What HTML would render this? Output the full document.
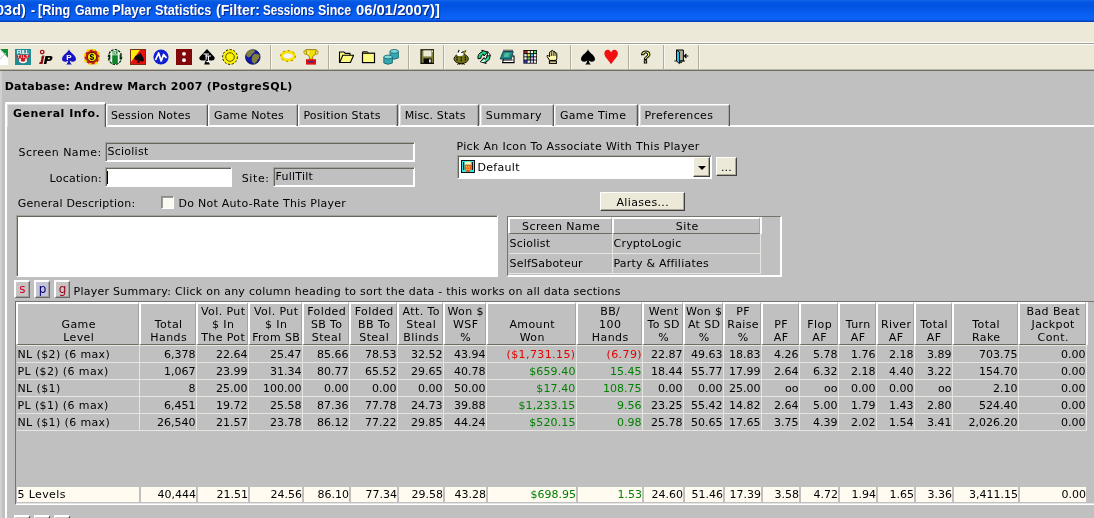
<!DOCTYPE html>
<html><head><meta charset="utf-8"><title>Ring Game Player Statistics</title>
<style>
html,body{margin:0;padding:0}
body{width:1094px;height:518px;overflow:hidden;position:relative;background:#c0c0c0;will-change:transform;font:11px "DejaVu Sans","Liberation Sans",sans-serif;color:#000;letter-spacing:.25px}
div,span{position:absolute;white-space:nowrap;box-sizing:border-box}
.t{line-height:13px;height:13px}
.b{font-weight:bold;letter-spacing:.2px}
#title{left:0;top:0;width:1094px;height:22px;background:linear-gradient(#1866e4 0,#0458e6 8%,#0252e0 25%,#055aec 50%,#0b64f6 78%,#0a5ef0 90%,#0548c8 96%,#033aa0 100%)}
.tw{font:bold 14px/17px "Liberation Sans",sans-serif;color:#fff;text-shadow:1px 1px 0 #0a2a8a;transform-origin:0 0;letter-spacing:0}
#menu{left:0;top:22px;width:1094px;height:49px;background:#ece9d8}
.hl{left:0;width:1094px;height:1px}
.sep{top:45px;width:2px;height:24px;border-left:1px solid #b0ad9c;border-right:1px solid #f8f7f0}
.ic{top:49px;width:16px;height:16px}
.tab{top:104px;height:22px;border:1px solid #fff;border-right-color:#555;border-bottom:none;border-radius:2px 2px 0 0;box-shadow:inset -1px 0 0 #a4a4a4,inset 1px 1px 0 #dcdcdc;padding:5px 0 0 6px;line-height:13px}
.sunk{border:1px solid;border-color:#808080 #fff #fff #808080}
.sunk2{border:1px solid;border-color:#a4a49c #fff #fff #a4a49c;box-shadow:inset 1px 1px 0 #66665e,inset -1px -1px 0 #fff}
.btn{background:#ece9d8;border:1px solid;border-color:#fff #404040 #404040 #fff;box-shadow:inset -1px -1px 0 #aca899;text-align:center}
.hc{top:302px;height:43px;border-style:solid;border-width:2px 1px 1px 2px;border-color:#fff #a4a4a4 #6c6c64 #fff;text-align:center;line-height:13px}
.hc span{left:1px;right:-.4px;bottom:0px;text-align:center;white-space:pre;line-height:13px;letter-spacing:.4px}
.c{height:17px;line-height:13px;padding-top:2px;border-right:1px solid #e6e6e0;border-bottom:1px solid #e6e6e0;text-align:right;padding-right:.5px;letter-spacing:0}
.c.l{text-align:left;padding-left:.5px;letter-spacing:.38px}
.f{top:487px;height:15px;background:#fffbf0;line-height:13px;padding-top:1px;text-align:right;padding-right:0;letter-spacing:0}
.f.l{text-align:left;padding-left:.5px;letter-spacing:.38px}
.r{color:#e00000}.g{color:#008000}
</style></head><body>

<div id="title"></div>
<span class="tw" style="left:-3.82px;top:1.5px;transform:scaleX(1.036)">03d)</span>
<span class="tw" style="left:30.58px;top:1.5px;transform:scaleX(0.885)">-</span>
<span class="tw" style="left:38.16px;top:1.5px;transform:scaleX(0.901)">[Ring</span>
<span class="tw" style="left:74.52px;top:1.5px;transform:scaleX(0.881)">Game</span>
<span class="tw" style="left:112.07px;top:1.5px;transform:scaleX(0.928)">Player</span>
<span class="tw" style="left:155.08px;top:1.5px;transform:scaleX(0.906)">Statistics</span>
<span class="tw" style="left:215.82px;top:1.5px;transform:scaleX(1.009)">(Filter:</span>
<span class="tw" style="left:263.03px;top:1.5px;transform:scaleX(0.832)">Sessions</span>
<span class="tw" style="left:318.29px;top:1.5px;transform:scaleX(0.889)">Since</span>
<span class="tw" style="left:355.67px;top:1.5px;transform:scaleX(1.057)">06/01/2007)]</span>
<div id="menu"></div>
<div class="hl" style="top:42px;background:#fff"></div><div class="hl" style="top:43px;background:#a09e8c"></div><div class="hl" style="top:44px;background:#fff"></div>
<div class="hl" style="top:69px;background:#b8b5a4"></div><div class="hl" style="top:70px;background:#716f64"></div>
<div style="left:0;top:71px;width:2px;height:447px;background:#d0d0d0"></div>
<div class="ic" style="left:-8px"><svg width="16" height="16" viewBox="0 0 16 16"><rect x="0" y="0" width="16" height="16" fill="#fff"/><path d="M8 0H16V9Z" fill="#109030"/><path d="M8 0L16 9M3 15L14 4" stroke="#c8c8c8" fill="none"/></svg></div>
<div class="ic" style="left:15px"><svg width="16" height="16" viewBox="0 0 16 16"><rect width="16" height="16" fill="#208c94"/><rect x="1.5" y="1" width="13" height="4.6" fill="#3c9ca4"/><text x="8" y="5" font-size="5" fill="#fff" font-family="Liberation Sans,sans-serif" font-weight="bold" text-anchor="middle" textLength="12">FULL</text><path d="M1.6 5.8H14.4V8.6H13L12 12.6Q8 15.8 4 12.6L3 8.6H1.6Z" fill="#d01820"/><text x="8" y="8.6" font-size="3.6" fill="#fff" font-family="Liberation Sans,sans-serif" font-weight="bold" text-anchor="middle" textLength="11">TILT</text><path d="M5 9.4V12.4Q8 14.6 11 12.4V9.4" stroke="#fff" stroke-width="1.7" fill="none"/></svg></div>
<div class="ic" style="left:38px"><svg width="16" height="16" viewBox="0 0 16 16"><circle cx="4.2" cy="3" r="1.7" fill="#fff" stroke="#a01010" stroke-width="1.3"/><path d="M4.6 6.5L6.4 6.5L4.6 15L1.2 15L1.6 13L2.6 13L3.6 8.4L2.8 8.4Z" fill="#901010"/><path d="M7.5 7H12.5Q15 7 14.4 9.5Q13.8 12 10.8 12H9L8.4 15H5.8Z" fill="#000"/><path d="M10 8.8H12L11.6 10.2H9.7Z" fill="#ece9d8"/></svg></div>
<div class="ic" style="left:61px"><svg width="16" height="16" viewBox="0 0 16 16"><path d="M8 0C8 3 1 6 1 10C1 13 5 13.5 7.2 11.5C7 13.5 6 15 5 15.5L11 15.5C10 15 9 13.5 8.8 11.5C11 13.5 15 13 15 10C15 6 8 3 8 0Z" fill="#1414c4"/><text x="8" y="11" font-size="8" fill="#fff" font-family="Liberation Sans,sans-serif" font-weight="bold" text-anchor="middle">P</text></svg></div>
<div class="ic" style="left:84px"><svg width="16" height="16" viewBox="0 0 16 16"><circle cx="8" cy="8" r="7.6" fill="#c81818"/><circle cx="8" cy="8" r="7.6" fill="none" stroke="#f0e000" stroke-width="2.4" stroke-dasharray="3 3"/><circle cx="8" cy="8" r="4.6" fill="#f4e800" stroke="#400" stroke-width=".8"/><text x="8" y="11.2" font-size="8.5" fill="#000" font-family="Liberation Sans,sans-serif" font-weight="bold" text-anchor="middle">$</text></svg></div>
<div class="ic" style="left:107px"><svg width="16" height="16" viewBox="0 0 16 16"><ellipse cx="8" cy="8" rx="6.6" ry="7.4" fill="#e8f4e8" stroke="#0c2c10" stroke-width="1.3" stroke-dasharray="2.6 1"/><path d="M5.2 6.2H10.8V14.6Q8 15.6 5.2 14.6Z" fill="#108428"/><rect x="5.6" y="1.2" width="4.8" height="4.2" fill="#187c30"/><text x="8" y="5" font-size="4.6" fill="#fff" font-family="Liberation Sans,sans-serif" font-weight="bold" text-anchor="middle">R</text><path d="M2.6 5.4V10.6M13.4 5.4V10.6" stroke="#0c2c10" stroke-width="1.5"/></svg></div>
<div class="ic" style="left:130px"><svg width="16" height="16" viewBox="0 0 16 16"><rect x=".5" y=".5" width="15" height="15" fill="#e81010" stroke="#7a3010"/><path d="M1 1H10L1 13Z" fill="#f8f000"/><g transform="translate(3.2 3.6) rotate(14 8 8) scale(.7)"><path d="M8 0C8 3 1 6 1 10C1 13 5 13.5 7.2 11.5C7 13.5 6 15 5 15.5L11 15.5C10 15 9 13.5 8.8 11.5C11 13.5 15 13 15 10C15 6 8 3 8 0Z" fill="#100808"/></g></svg></div>
<div class="ic" style="left:153px"><svg width="16" height="16" viewBox="0 0 16 16"><circle cx="8" cy="8" r="7.6" fill="#1020d0"/><path d="M2.5 11L5.6 4L8.2 12L10.6 5.5L13.5 9" stroke="#fff" stroke-width="1.8" fill="none" stroke-linejoin="round"/></svg></div>
<div class="ic" style="left:176px"><svg width="16" height="16" viewBox="0 0 16 16"><rect width="16" height="16" fill="#800808"/><circle cx="8" cy="4.8" r="1.9" fill="#fff"/><circle cx="8" cy="11.2" r="1.9" fill="#fff"/></svg></div>
<div class="ic" style="left:199px"><svg width="16" height="16" viewBox="0 0 16 16"><path d="M8 0L15.6 8.2Q16 11.4 12.8 11.6Q10.4 11.6 9 10.4L10.8 15.6H5.2L7 10.4Q5.6 11.6 3.2 11.6Q0 11.4 .4 8.2Z" fill="#000"/><path d="M4.4 5H10M7.2 5V10.8M6.4 7H12M9.4 7V12.6M7.4 12.6H11" stroke="#fff" stroke-width="1.1" fill="none"/></svg></div>
<div class="ic" style="left:222px"><svg width="16" height="16" viewBox="0 0 16 16"><circle cx="8" cy="8" r="7.4" fill="#f8f000" stroke="#202000" stroke-width="1" stroke-dasharray="2.2 1.6"/><circle cx="8" cy="8" r="4.3" fill="#fcf400" stroke="#504800" stroke-width=".9"/></svg></div>
<div class="ic" style="left:245px"><svg width="16" height="16" viewBox="0 0 16 16"><circle cx="7.8" cy="8" r="7.3" fill="#1018b0" stroke="#101040" stroke-width=".8"/><path d="M3.6 2Q6.5 0 9.6 1.4Q10.2 3.8 7.4 4.8Q6.4 7.6 3.5 8.6Q.8 7.4 1.2 5Q2 3 3.6 2Z" fill="#80803c"/><path d="M9.2 5Q12.6 4 14.4 6.2Q14.8 9.2 12.8 10.6Q11.8 14 9 14.8Q6.2 12.8 6.8 10Q6.8 6.4 9.2 5Z" fill="#80803c"/></svg></div>
<div class="ic" style="left:280px"><svg width="16" height="16" viewBox="0 0 16 16"><ellipse cx="8" cy="7" rx="6.4" ry="4.2" fill="none" stroke="#f4e400" stroke-width="2.8"/><ellipse cx="8" cy="7" rx="4.4" ry="2" fill="#f4f0f8"/><ellipse cx="8" cy="7" rx="7.5" ry="5.4" fill="none" stroke="#a07800" stroke-width=".9" stroke-dasharray="2 3"/></svg></div>
<div class="ic" style="left:303px"><svg width="16" height="16" viewBox="0 0 16 16"><path d="M2.8.6H13.2Q13.4 6 9.6 7.6V10.2H6.4V7.6Q2.6 6 2.8.6Z" fill="#f0e000" stroke="#806000" stroke-width=".7"/><path d="M5.2 1.6V5.4" stroke="#fffcc0" stroke-width="1"/><path d="M2.8 1.6Q.2 1.8 1.2 4.2Q2 5.6 3.8 5.4M13.2 1.6Q15.8 1.8 14.8 4.2Q14 5.6 12.2 5.4" stroke="#c0a800" stroke-width="1.2" fill="none"/><rect x="3" y="10.2" width="10" height="5.4" fill="#e01010"/><rect x="5" y="12" width="6" height="1.4" fill="#303080"/></svg></div>
<div class="ic" style="left:338px"><svg width="16" height="16" viewBox="0 0 16 16"><path d="M1.5 3H6L7.2 4.4H12V6.2H15.6L12.4 13.5H1.5Z" fill="#fffc80" stroke="#000" stroke-width="1.1" stroke-linejoin="round"/><path d="M1.8 13.2L4.8 6.2H12" fill="none" stroke="#000" stroke-width="1.1"/></svg></div>
<div class="ic" style="left:360px"><svg width="16" height="16" viewBox="0 0 16 16"><path d="M2.6 4.2V2.8H7.4L8.4 4.2" fill="#fffc80" stroke="#000" stroke-width="1"/><rect x="2.5" y="4.2" width="12" height="9.4" fill="#fffc80" stroke="#000" stroke-width="1.2"/></svg></div>
<div class="ic" style="left:383px"><svg width="16" height="16" viewBox="0 0 16 16"><g stroke="#106068" stroke-width=".8"><path d="M7 2.2V9Q10.6 11.4 15.4 9V2.2Z" fill="#38a8b0"/><ellipse cx="11.2" cy="2.4" rx="4.2" ry="1.9" fill="#80d8dc"/><path d="M.8 8V14Q5 16.6 9.4 14V8Z" fill="#38a8b0"/><ellipse cx="5.1" cy="8" rx="4.3" ry="1.9" fill="#80d8dc"/></g></svg></div>
<div class="ic" style="left:418px"><svg width="16" height="16" viewBox="0 0 16 16"><g transform="translate(1 0)"><rect x="2" y=".8" width="13" height="13.6" fill="#80803c" stroke="#101000" stroke-width="1.2"/><rect x="4.4" y="1.4" width="8" height="6" fill="#ece9d8"/><rect x="4.6" y="9.4" width="8" height="5" fill="#080808"/><rect x="10" y="10.4" width="1.8" height="3" fill="#ece9d8"/><rect x="13" y="1.6" width="1" height="1.2" fill="#fff"/></g></svg></div>
<div class="ic" style="left:453px"><svg width="16" height="16" viewBox="0 0 16 16"><ellipse cx="8.2" cy="9.8" rx="7.2" ry="4.8" fill="#74741c" stroke="#181800" stroke-width="1"/><path d="M4 6.4Q4 2 7.2 1.4Q10.4 2 10.6 6Q7.4 7.6 4 6.4Z" fill="#fff"/><path d="M9.6 2.8L13 1.6L11.2 4.8Z" fill="#e8d800" stroke="#000" stroke-width=".6"/><path d="M5 3.6L6.2 1M8.4 3.8L9.6 3" stroke="#000" stroke-width="1.1"/><path d="M4 7.6V12.6M8.2 8V13.2M12.4 7.6V12.6" stroke="#080800" stroke-width="1.2" stroke-dasharray="1.6 .8"/><path d="M4.6 15.8L5.8 14.2L7 15.8M9 15.8L10.2 14.2L11.4 15.8" stroke="#000" stroke-width="1" fill="none"/></svg></div>
<div class="ic" style="left:476px"><svg width="16" height="16" viewBox="0 0 16 16"><path d="M2 9.8Q1.2 4.6 6.4 2.8L5.8 1.2L11.4 3L8 7L7.4 5.2Q4.6 6.2 4.8 9.4Z" fill="#20d890" stroke="#000" stroke-width="1"/><path d="M13.8 5.6Q15 11 9.6 13L10.2 14.4L4.4 12.8L8 8.6L8.6 10.6Q11.4 9.6 11 6.2Z" fill="#20d890" stroke="#000" stroke-width="1"/><path d="M9 10.8Q7 13 5.4 12.6" stroke="#fff" stroke-width="1.4" fill="none"/><path d="M11.6 2.4L14.6 6.4L11.4 7Z" fill="#e8fff4" stroke="#000" stroke-width=".8"/></svg></div>
<div class="ic" style="left:499px"><svg width="16" height="16" viewBox="0 0 16 16"><path d="M5 7H15V13.6H3.6Z" fill="#fff" stroke="#000" stroke-width="1.1"/><path d="M4 11H13.6" stroke="#000" stroke-width="1"/><path d="M4.2 2.4H14.2L12.4 10H1.2Z" fill="#18888c" stroke="#084048" stroke-width=".9"/><path d="M5.6 5H10.4M5 7H9.8" stroke="#90f090" stroke-width="1.2"/><path d="M5 .6V2.4M7 .6V2.4M9 .6V2.4M11 .6V2.4M13 .6V2.4" stroke="#000" stroke-width=".9"/></svg></div>
<div class="ic" style="left:522px"><svg width="16" height="16" viewBox="0 0 16 16"><rect x="1.4" y="1" width="13.6" height="13.6" fill="#000"/><rect x="2.3" y="1.9" width="2.4" height="2.3" fill="#b02828"/><rect x="5.5" y="1.9" width="2.4" height="2.3" fill="#f4f0a0"/><rect x="8.7" y="1.9" width="2.4" height="2.3" fill="#f8f8f8"/><rect x="11.9" y="1.9" width="2.4" height="2.3" fill="#50d850"/><rect x="2.3" y="5.1" width="2.4" height="2.3" fill="#f0f0f0"/><rect x="5.5" y="5.1" width="2.4" height="2.3" fill="#f0e840"/><rect x="8.7" y="5.1" width="2.4" height="2.3" fill="#40c8e8"/><rect x="11.9" y="5.1" width="2.4" height="2.3" fill="#f8f8f8"/><rect x="2.3" y="8.3" width="2.4" height="2.3" fill="#f8f8f8"/><rect x="5.5" y="8.3" width="2.4" height="2.3" fill="#58d058"/><rect x="8.7" y="8.3" width="2.4" height="2.3" fill="#e8a0e8"/><rect x="11.9" y="8.3" width="2.4" height="2.3" fill="#f0f0f0"/><rect x="2.3" y="11.5" width="2.4" height="2.3" fill="#3838e0"/><rect x="5.5" y="11.5" width="2.4" height="2.3" fill="#f8f8f8"/><rect x="8.7" y="11.5" width="2.4" height="2.3" fill="#d8d8ff"/><rect x="11.9" y="11.5" width="2.4" height="2.3" fill="#f8f8f8"/></svg></div>
<div class="ic" style="left:545px"><svg width="16" height="16" viewBox="0 0 16 16"><path d="M4.6 11.4L2.2 7.6Q1.6 6.2 3.2 6.4L4.6 7.8V3.2Q5.4 2 6.2 3.2V2Q7.2.6 8.2 2V2.6Q9.2 1.6 10 3V4Q11 3.2 11.8 4.4V9.6L11 11.4Z" fill="#fff8a8" stroke="#000" stroke-width="1"/><path d="M6.4 3.4V7M8.2 2.8V7M10 3.6V7" stroke="#000" stroke-width=".8"/><rect x="4.4" y="12" width="7" height="2.4" fill="#e8d890" stroke="#000" stroke-width="1"/></svg></div>
<div class="ic" style="left:580px"><svg width="16" height="16" viewBox="0 0 16 16"><path d="M8 0C8 3 1 6 1 10C1 13 5 13.5 7.2 11.5C7 13.5 6 15 5 15.5L11 15.5C10 15 9 13.5 8.8 11.5C11 13.5 15 13 15 10C15 6 8 3 8 0Z" fill="#000"/></svg></div>
<div class="ic" style="left:603px"><svg width="16" height="16" viewBox="0 0 16 16"><g transform="translate(.9 .4) scale(.9 .96)"><path d="M8 15.5C5 10.5.5 8 .5 4.2C.5 1.5 2.5.3 4.2.3C6 .3 7.5 1.6 8 3.2C8.5 1.6 10 .3 11.8.3C13.5.3 15.5 1.5 15.5 4.2C15.5 8 11 10.5 8 15.5Z" fill="#f01010"/></g></svg></div>
<div class="ic" style="left:638px"><svg width="16" height="16" viewBox="0 0 16 16"><text x="8" y="13.6" font-size="16.5" fill="#f8f468" stroke="#000" stroke-width="1" font-family="Liberation Sans,sans-serif" font-weight="bold" text-anchor="middle">?</text></svg></div>
<div class="ic" style="left:673px"><svg width="16" height="16" viewBox="0 0 16 16"><path d="M3.6 1H10.4V12H3.6Z" fill="#a8a898" stroke="#000" stroke-width="1"/><path d="M3.6 1L6.4 3V14.6L3.6 12Z" fill="#30d8f8" stroke="#000" stroke-width="1"/><path d="M1.4 12H3.6M7 12H12M7 13.6H9" stroke="#000" stroke-width=".9"/><path d="M15.4 7H11.6M13.4 5L11.4 7L13.4 9" stroke="#000" stroke-width="1.1" fill="none"/></svg></div>
<div class="sep" style="left:270px"></div>
<div class="sep" style="left:328px"></div>
<div class="sep" style="left:408px"></div>
<div class="sep" style="left:443px"></div>
<div class="sep" style="left:570px"></div>
<div class="sep" style="left:628px"></div>
<div class="sep" style="left:663px"></div>
<div class="sep" style="left:698px"></div>
<span class="t b" id="db" style="left:4.70px;top:80px;letter-spacing:0.275px">Database: Andrew March 2007 (PostgreSQL)</span>
<div style="left:5px;top:125px;width:1100px;height:400px;border-left:2px solid #fff;border-top:2px solid #fff"></div>
<div class="tab" style="left:106px;width:102px"></div>
<span class="t" id="t0" style="left:110.90px;top:109px;letter-spacing:0.198px">Session Notes</span>
<div class="tab" style="left:208px;width:90px"></div>
<span class="t" id="t1" style="left:213.99px;top:109px;letter-spacing:0.184px">Game Notes</span>
<div class="tab" style="left:298px;width:100px"></div>
<span class="t" id="t2" style="left:303.40px;top:109px;letter-spacing:0.212px">Position Stats</span>
<div class="tab" style="left:399px;width:80px"></div>
<span class="t" id="t3" style="left:404.63px;top:109px;letter-spacing:0.153px">Misc. Stats</span>
<div class="tab" style="left:480px;width:74px"></div>
<span class="t" id="t4" style="left:485.85px;top:109px;letter-spacing:0.404px">Summary</span>
<div class="tab" style="left:554px;width:84px"></div>
<span class="t" id="t5" style="left:559.89px;top:109px;letter-spacing:0.362px">Game Time</span>
<div class="tab" style="left:639px;width:91px"></div>
<span class="t" id="t6" style="left:644.41px;top:109px;letter-spacing:0.386px">Preferences</span>
<div class="tab" style="left:5px;top:102px;width:101px;height:25px;background:#c0c0c0;border-left-width:2px;border-top-width:2px"></div>
<span class="t b" id="tsel" style="left:12.94px;top:107px;letter-spacing:0.500px">General Info.</span>
<span class="t" id="lsn" style="left:18.54px;top:146px;letter-spacing:0.473px">Screen Name:</span>
<div class="sunk2" style="left:105px;top:142px;width:310px;height:20px"><span class="t" style="left:1.5px;top:2px">Sciolist</span></div>
<span class="t" id="lloc" style="left:49.51px;top:172px;letter-spacing:0.247px">Location:</span>
<div class="sunk2" style="left:105px;top:167px;width:127px;height:20px;background:#fff"><div style="left:1px;top:3px;width:1px;height:13px;background:#000"></div></div>
<span class="t" id="lsite" style="left:241.67px;top:172px;letter-spacing:0.632px">Site:</span>
<div class="sunk2" style="left:273px;top:167px;width:142px;height:20px"><span class="t" style="left:1.5px;top:2px">FullTilt</span></div>
<span class="t" id="lgd" style="left:17.82px;top:197px;letter-spacing:0.218px">General Description:</span>
<div class="sunk" style="left:161px;top:196px;width:13px;height:13px;background:#fbfaf2;border-color:#8a8a80 #fff #fff #8a8a80;box-shadow:inset 1px 1px 0 #9c9c94"></div>
<span class="t" id="ldn" style="left:178.45px;top:197px;letter-spacing:0.272px">Do Not Auto-Rate This Player</span>
<div class="sunk2" style="left:16px;top:215px;width:482px;height:62px;background:#fff"></div>
<span class="t" id="lpick" style="left:456.51px;top:140px;letter-spacing:0.320px">Pick An Icon To Associate With This Player</span>
<div class="sunk2" style="left:457px;top:155px;width:255px;height:24px;background:#fff"><div style="left:3px;top:4px;width:14px;height:13px"><svg width="14" height="13" viewBox="0 0 14 13"><rect x=".5" y=".5" width="13" height="12" fill="#30e4e8" stroke="#101010"/><path d="M2.6 2V10M11.4 2V10" stroke="#101820" stroke-width="1.2"/><path d="M3.6 5.2H10.4V8.4Q9.4 10.6 8.6 10.8V12H5.4V10.8Q4.6 10.6 3.6 8.4Z" fill="#e85818"/><path d="M4.6 6H5.8V7.2H4.6ZM7 6H8.2V7.2H7ZM5.8 7.4H7V8.6H5.8ZM8.2 7.4H9.4V8.6H8.2ZM5 9H6.2V10H5ZM7.4 9H8.6V10H7.4Z" fill="#f8d840"/><path d="M3.8 2.6Q7 .6 10.2 2.6V5H3.8Z" fill="#fcf4b0"/><path d="M3.8 5H10.2" stroke="#c06010" stroke-width=".8"/></svg></div></div>
<span class="t" id="ldef" style="left:477.42px;top:161px;letter-spacing:0.325px">Default</span>
<div class="btn" style="left:693px;top:157px;width:17px;height:20px"><div style="left:4px;top:8px;width:0;height:0;border:4px solid transparent;border-top:4px solid #000;border-bottom:none"></div></div>
<div class="btn" style="left:716px;top:157px;width:21px;height:19px"><span class="t" style="left:0;right:0;top:3px;text-align:center">...</span></div>
<div class="btn" style="left:600px;top:192px;width:85px;height:19px"></div>
<span class="t" id="lali" style="left:616.47px;top:196px;letter-spacing:0.343px">Aliases...</span>
<div style="left:507px;top:216px;width:275px;height:61px;border-style:solid;border-width:1px 2px 2px 1px;border-color:#74746c #fff #fff #74746c"></div>
<div class="hc" style="left:508px;top:217px;width:104px;height:17px"><span style="bottom:0">Screen Name</span></div>
<div class="hc" style="left:612px;top:217px;width:148px;height:17px"><span style="bottom:0">Site</span></div>
<div style="left:760px;top:217px;width:2px;height:17px;background:#fafafa"></div>
<div class="c l" style="left:509px;top:234px;width:104px;height:20px;padding-top:3px;letter-spacing:.22px">Sciolist</div>
<div class="c l" style="left:613px;top:234px;width:148px;height:20px;padding-top:3px;letter-spacing:.22px">CryptoLogic</div>
<div class="c l" style="left:509px;top:254px;width:104px;height:20px;padding-top:3px;letter-spacing:.22px">SelfSaboteur</div>
<div class="c l" style="left:613px;top:254px;width:148px;height:20px;padding-top:3px;letter-spacing:.22px">Party &amp; Affiliates</div>
<div style="left:14px;top:280px;width:16px;height:18px;background:#c8c4c4;border-style:solid;border-width:2px 1px 1px 2px;border-color:#fff #686868 #686868 #fff;box-shadow:inset -1px -1px 0 #a0a0a0;color:#d8002c"><span style="left:0;right:0;top:1px;text-align:center;font-size:12px;line-height:13px;letter-spacing:0">s</span></div>
<div style="left:34px;top:280px;width:16px;height:18px;background:#c4c4d6;border-style:solid;border-width:2px 1px 1px 2px;border-color:#fff #686868 #686868 #fff;box-shadow:inset -1px -1px 0 #a0a0a0;color:#000078"><span style="left:0;right:0;top:1px;text-align:center;font-size:12px;line-height:13px;letter-spacing:0">p</span></div>
<div style="left:54px;top:280px;width:16px;height:18px;background:#c8c4c4;border-style:solid;border-width:2px 1px 1px 2px;border-color:#fff #686868 #686868 #fff;box-shadow:inset -1px -1px 0 #a0a0a0;color:#98001c"><span style="left:0;right:0;top:1px;text-align:center;font-size:12px;line-height:13px;letter-spacing:0">g</span></div>
<span class="t" id="lps" style="left:73.51px;top:285px;letter-spacing:0.258px">Player Summary: Click on any column heading to sort the data - this works on all data sections</span>
<div style="left:15px;top:301px;width:1090px;height:204px;border:1px solid;border-color:#74746c #fff #fff #74746c;box-shadow:inset 0 -1px 0 #e4e4e4"></div>
<div style="left:1086px;top:302px;width:2px;height:43px;background:#fafafa"></div>
<div class="hc" style="left:16px;width:123px"><span>Game
Level</span></div>
<div class="hc" style="left:139px;width:57px"><span>Total
Hands</span></div>
<div class="hc" style="left:196px;width:52px"><span>Vol. Put
$ In
The Pot</span></div>
<div class="hc" style="left:248px;width:54px"><span>Vol. Put
$ In
From SB</span></div>
<div class="hc" style="left:302px;width:47px"><span>Folded
SB To
Steal</span></div>
<div class="hc" style="left:349px;width:48px"><span>Folded
BB To
Steal</span></div>
<div class="hc" style="left:397px;width:46px"><span>Att. To
Steal
Blinds</span></div>
<div class="hc" style="left:443px;width:43px"><span>Won $
WSF
%</span></div>
<div class="hc" style="left:486px;width:90px"><span>Amount
Won</span></div>
<div class="hc" style="left:576px;width:66px"><span>BB/
100
Hands</span></div>
<div class="hc" style="left:642px;width:41px"><span>Went
To SD
%</span></div>
<div class="hc" style="left:683px;width:40px"><span>Won $
At SD
%</span></div>
<div class="hc" style="left:723px;width:38px"><span>PF
Raise
%</span></div>
<div class="hc" style="left:761px;width:38px"><span>PF
AF</span></div>
<div class="hc" style="left:799px;width:39px"><span>Flop
AF</span></div>
<div class="hc" style="left:838px;width:38px"><span>Turn
AF</span></div>
<div class="hc" style="left:876px;width:38px"><span>River
AF</span></div>
<div class="hc" style="left:914px;width:38px"><span>Total
AF</span></div>
<div class="hc" style="left:952px;width:66px"><span>Total
Rake</span></div>
<div class="hc" style="left:1018px;width:68px"><span>Bad Beat
Jackpot
Cont.</span></div>
<div style="left:17px;top:345px;width:1070px;height:1px;background:#e6e6e0"></div>
<div class="c l" style="left:17px;top:346px;width:123px">NL ($2) (6 max)</div>
<div class="c" style="left:140px;top:346px;width:57px">6,378</div>
<div class="c" style="left:197px;top:346px;width:52px">22.64</div>
<div class="c" style="left:249px;top:346px;width:54px">25.47</div>
<div class="c" style="left:303px;top:346px;width:47px">85.66</div>
<div class="c" style="left:350px;top:346px;width:48px">78.53</div>
<div class="c" style="left:398px;top:346px;width:46px">32.52</div>
<div class="c" style="left:444px;top:346px;width:43px">43.94</div>
<div class="c r" style="left:487px;top:346px;width:90px;letter-spacing:.4px">($1,731.15)</div>
<div class="c r" style="left:577px;top:346px;width:66px;letter-spacing:.4px;padding-right:0;text-indent:1px">(6.79)</div>
<div class="c" style="left:643px;top:346px;width:41px">22.87</div>
<div class="c" style="left:684px;top:346px;width:40px">49.63</div>
<div class="c" style="left:724px;top:346px;width:38px">18.83</div>
<div class="c" style="left:762px;top:346px;width:38px">4.26</div>
<div class="c" style="left:800px;top:346px;width:39px">5.78</div>
<div class="c" style="left:839px;top:346px;width:38px">1.76</div>
<div class="c" style="left:877px;top:346px;width:38px">2.18</div>
<div class="c" style="left:915px;top:346px;width:38px">3.89</div>
<div class="c" style="left:953px;top:346px;width:66px">703.75</div>
<div class="c" style="left:1019px;top:346px;width:68px">0.00</div>
<div class="c l" style="left:17px;top:363px;width:123px">PL ($2) (6 max)</div>
<div class="c" style="left:140px;top:363px;width:57px">1,067</div>
<div class="c" style="left:197px;top:363px;width:52px">23.99</div>
<div class="c" style="left:249px;top:363px;width:54px">31.34</div>
<div class="c" style="left:303px;top:363px;width:47px">80.77</div>
<div class="c" style="left:350px;top:363px;width:48px">65.52</div>
<div class="c" style="left:398px;top:363px;width:46px">29.65</div>
<div class="c" style="left:444px;top:363px;width:43px">40.78</div>
<div class="c g" style="left:487px;top:363px;width:90px;letter-spacing:.12px">$659.40</div>
<div class="c g" style="left:577px;top:363px;width:66px">15.45</div>
<div class="c" style="left:643px;top:363px;width:41px">18.44</div>
<div class="c" style="left:684px;top:363px;width:40px">55.77</div>
<div class="c" style="left:724px;top:363px;width:38px">17.99</div>
<div class="c" style="left:762px;top:363px;width:38px">2.64</div>
<div class="c" style="left:800px;top:363px;width:39px">6.32</div>
<div class="c" style="left:839px;top:363px;width:38px">2.18</div>
<div class="c" style="left:877px;top:363px;width:38px">4.40</div>
<div class="c" style="left:915px;top:363px;width:38px">3.22</div>
<div class="c" style="left:953px;top:363px;width:66px">154.70</div>
<div class="c" style="left:1019px;top:363px;width:68px">0.00</div>
<div class="c l" style="left:17px;top:380px;width:123px">NL ($1)</div>
<div class="c" style="left:140px;top:380px;width:57px">8</div>
<div class="c" style="left:197px;top:380px;width:52px">25.00</div>
<div class="c" style="left:249px;top:380px;width:54px">100.00</div>
<div class="c" style="left:303px;top:380px;width:47px">0.00</div>
<div class="c" style="left:350px;top:380px;width:48px">0.00</div>
<div class="c" style="left:398px;top:380px;width:46px">0.00</div>
<div class="c" style="left:444px;top:380px;width:43px">50.00</div>
<div class="c g" style="left:487px;top:380px;width:90px;letter-spacing:.12px">$17.40</div>
<div class="c g" style="left:577px;top:380px;width:66px">108.75</div>
<div class="c" style="left:643px;top:380px;width:41px">0.00</div>
<div class="c" style="left:684px;top:380px;width:40px">0.00</div>
<div class="c" style="left:724px;top:380px;width:38px">25.00</div>
<div class="c" style="left:762px;top:380px;width:38px">oo</div>
<div class="c" style="left:800px;top:380px;width:39px">oo</div>
<div class="c" style="left:839px;top:380px;width:38px">0.00</div>
<div class="c" style="left:877px;top:380px;width:38px">0.00</div>
<div class="c" style="left:915px;top:380px;width:38px">oo</div>
<div class="c" style="left:953px;top:380px;width:66px">2.10</div>
<div class="c" style="left:1019px;top:380px;width:68px">0.00</div>
<div class="c l" style="left:17px;top:397px;width:123px">PL ($1) (6 max)</div>
<div class="c" style="left:140px;top:397px;width:57px">6,451</div>
<div class="c" style="left:197px;top:397px;width:52px">19.72</div>
<div class="c" style="left:249px;top:397px;width:54px">25.58</div>
<div class="c" style="left:303px;top:397px;width:47px">87.36</div>
<div class="c" style="left:350px;top:397px;width:48px">77.78</div>
<div class="c" style="left:398px;top:397px;width:46px">24.73</div>
<div class="c" style="left:444px;top:397px;width:43px">39.88</div>
<div class="c g" style="left:487px;top:397px;width:90px;letter-spacing:.12px">$1,233.15</div>
<div class="c g" style="left:577px;top:397px;width:66px">9.56</div>
<div class="c" style="left:643px;top:397px;width:41px">23.25</div>
<div class="c" style="left:684px;top:397px;width:40px">55.42</div>
<div class="c" style="left:724px;top:397px;width:38px">14.82</div>
<div class="c" style="left:762px;top:397px;width:38px">2.64</div>
<div class="c" style="left:800px;top:397px;width:39px">5.00</div>
<div class="c" style="left:839px;top:397px;width:38px">1.79</div>
<div class="c" style="left:877px;top:397px;width:38px">1.43</div>
<div class="c" style="left:915px;top:397px;width:38px">2.80</div>
<div class="c" style="left:953px;top:397px;width:66px">524.40</div>
<div class="c" style="left:1019px;top:397px;width:68px">0.00</div>
<div class="c l" style="left:17px;top:414px;width:123px">NL ($1) (6 max)</div>
<div class="c" style="left:140px;top:414px;width:57px">26,540</div>
<div class="c" style="left:197px;top:414px;width:52px">21.57</div>
<div class="c" style="left:249px;top:414px;width:54px">23.78</div>
<div class="c" style="left:303px;top:414px;width:47px">86.12</div>
<div class="c" style="left:350px;top:414px;width:48px">77.22</div>
<div class="c" style="left:398px;top:414px;width:46px">29.85</div>
<div class="c" style="left:444px;top:414px;width:43px">44.24</div>
<div class="c g" style="left:487px;top:414px;width:90px;letter-spacing:.12px">$520.15</div>
<div class="c g" style="left:577px;top:414px;width:66px">0.98</div>
<div class="c" style="left:643px;top:414px;width:41px">25.78</div>
<div class="c" style="left:684px;top:414px;width:40px">50.65</div>
<div class="c" style="left:724px;top:414px;width:38px">17.65</div>
<div class="c" style="left:762px;top:414px;width:38px">3.75</div>
<div class="c" style="left:800px;top:414px;width:39px">4.39</div>
<div class="c" style="left:839px;top:414px;width:38px">2.02</div>
<div class="c" style="left:877px;top:414px;width:38px">1.54</div>
<div class="c" style="left:915px;top:414px;width:38px">3.41</div>
<div class="c" style="left:953px;top:414px;width:66px">2,026.20</div>
<div class="c" style="left:1019px;top:414px;width:68px">0.00</div>
<div class="f l" style="left:17px;width:122px">5 Levels</div>
<div class="f" style="left:141px;width:55px">40,444</div>
<div class="f" style="left:198px;width:50px">21.51</div>
<div class="f" style="left:250px;width:52px">24.56</div>
<div class="f" style="left:304px;width:45px">86.10</div>
<div class="f" style="left:351px;width:46px">77.34</div>
<div class="f" style="left:399px;width:44px">29.58</div>
<div class="f" style="left:445px;width:41px">43.28</div>
<div class="f g" style="left:488px;width:88px">$698.95</div>
<div class="f g" style="left:578px;width:64px">1.53</div>
<div class="f" style="left:644px;width:39px">24.60</div>
<div class="f" style="left:685px;width:38px">51.46</div>
<div class="f" style="left:725px;width:36px">17.39</div>
<div class="f" style="left:763px;width:36px">3.58</div>
<div class="f" style="left:801px;width:37px">4.72</div>
<div class="f" style="left:840px;width:36px">1.94</div>
<div class="f" style="left:878px;width:36px">1.65</div>
<div class="f" style="left:916px;width:36px">3.36</div>
<div class="f" style="left:954px;width:64px">3,411.15</div>
<div class="f" style="left:1020px;width:66px">0.00</div>
<div class="btn" style="left:14px;top:515px;width:16px;height:18px;background:#d2caca;border-top:2px solid #fff"></div>
<div class="btn" style="left:34px;top:515px;width:16px;height:18px;background:#d2caca;border-top:2px solid #fff"></div>
<div class="btn" style="left:54px;top:515px;width:16px;height:18px;background:#d2caca;border-top:2px solid #fff"></div>
</body></html>
